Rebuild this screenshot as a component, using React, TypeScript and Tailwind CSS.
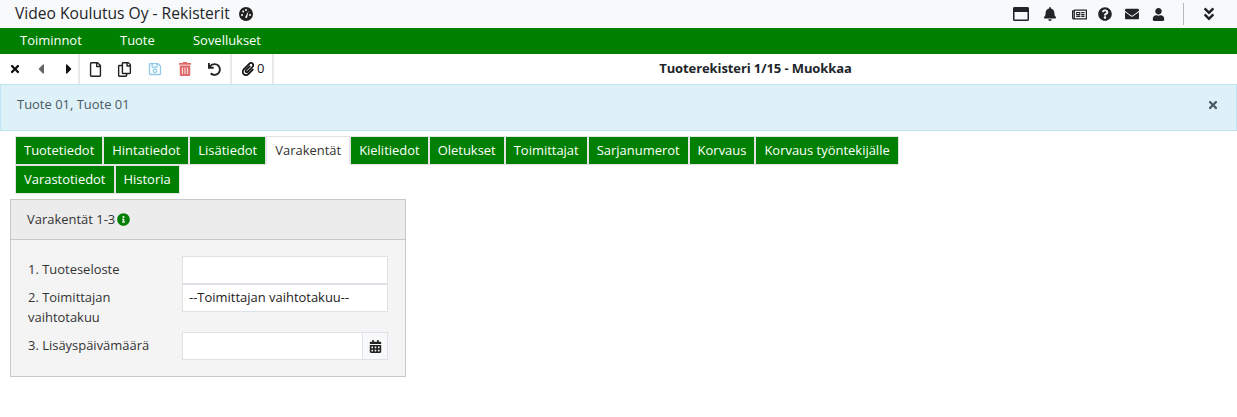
import { ReactNode } from 'react';
import {
  FaTimes, FaCaretLeft, FaCaretRight, FaRegFile, FaRegCopy, FaRegSave, FaTrashAlt, FaUndo, FaPaperclip,
  FaRegWindowMaximize, FaBell, FaRegNewspaper, FaQuestionCircle, FaEnvelope, FaUser, FaAngleDoubleDown,
  FaInfoCircle, FaCalendarAlt,
} from 'react-icons/fa';

const tabsRow1 = ['Tuotetiedot', 'Hintatiedot', 'Lisätiedot', 'Varakentät', 'Kielitiedot', 'Oletukset', 'Toimittajat', 'Sarjanumerot', 'Korvaus', 'Korvaus työntekijälle'];
const tabsRow2 = ['Varastotiedot', 'Historia'];

function Tab({ label }: { label: string }) {
  const active = label === 'Varakentät';
  return (
    <div
      className={`h-[29px] px-[8px] flex items-center border border-[#e4e4e4] text-[12.96px] ${
        active ? 'bg-white text-[#333] border-b-white' : 'bg-[#008000] text-white'
      }`}
    >
      {label}
    </div>
  );
}

function GaugeIcon() {
  return (
    <svg width="14" height="14" viewBox="0 0 14 14" className="ml-[9px]">
      <circle cx="7" cy="7" r="7" fill="#222" />
      <circle cx="3" cy="8" r="1" fill="#fff" />
      <circle cx="4.2" cy="4.4" r="1" fill="#fff" />
      <circle cx="7" cy="3" r="1" fill="#fff" />
      <circle cx="11" cy="8" r="1" fill="#fff" />
      <path d="M6 10.5 L9.6 3.8 L8 11 Z" fill="#fff" />
    </svg>
  );
}

function FieldRow({ label, children, className }: { label: string; children: ReactNode; className?: string }) {
  return (
    <div className={`flex ${className ?? ''}`}>
      <div className="w-[154px] pt-[3px] leading-[20px] pr-[10px]">{label}</div>
      {children}
    </div>
  );
}

export default function App() {
  return (
    <div className="w-[1237px] h-[417px] bg-white overflow-hidden text-[12.96px] text-[#333]" style={{ fontFamily: '"Open Sans", sans-serif' }}>
      {/* Top bar */}
      <div className="h-[28px] bg-[#f8f9fa] flex items-center pl-[15px] pr-[20px] text-[#212529]">
        <span className="text-[15.6px]">Video Koulutus Oy - Rekisterit</span>
        <GaugeIcon />
        <div className="ml-auto flex items-center text-[#212529]">
          <FaRegWindowMaximize className="text-[16px] mr-[14px]" />
          <FaBell className="text-[14px] mr-[15px]" />
          <FaRegNewspaper className="text-[15px] mr-[11px]" />
          <FaQuestionCircle className="text-[14px] mr-[13px]" />
          <FaEnvelope className="text-[14px] mr-[13px]" />
          <FaUser className="text-[13px] mr-[18px]" />
          <div className="w-px h-[22px] bg-[#b8b8b8] mr-[17px]" />
          <FaAngleDoubleDown className="text-[16px]" />
        </div>
      </div>

      {/* Green menu */}
      <div className="h-[26px] bg-[#008000] flex items-center pl-[20px] text-white">
        <span className="w-[100px]">Toiminnot</span>
        <span className="w-[73px]">Tuote</span>
        <span>Sovellukset</span>
      </div>

      {/* Toolbar */}
      <div className="h-[30px] flex">
        <div className="w-[80px] flex items-center border-r-2 border-[#e8e8e8] pl-[9px] text-[#111]">
          <FaTimes className="text-[12px] mr-[12px]" />
          <FaCaretLeft className="text-[16px] text-[#666] mr-[12px]" />
          <FaCaretRight className="text-[16px]" />
        </div>
        <div className="w-[152px] flex items-center border-r-2 border-[#e8e8e8] text-[#222]">
          <FaRegFile className="text-[15px] ml-[8px] mr-[14px]" />
          <FaRegCopy className="text-[15px] mr-[16px]" />
          <FaRegSave className="text-[14px] text-[#8fcbe8] mr-[16px]" />
          <FaTrashAlt className="text-[14px] text-[#e06a6a] mr-[16px]" />
          <FaUndo className="text-[13px]" />
        </div>
        <div className="w-[42px] flex items-center border-r-2 border-[#e8e8e8] pl-[9px] text-[#111]">
          <FaPaperclip className="text-[14px] mr-[2px]" />
          <span>0</span>
        </div>
        <div className="flex-1 flex items-center justify-center font-bold tracking-[-0.1px] text-[13px] text-[#212529]">Tuoterekisteri 1/15 - Muokkaa</div>
      </div>

      {/* Alert */}
      <div className="h-[47px] bg-[#dff1f8] border border-[#bde5f3] flex items-center pl-[16px] pr-[17px] text-[#4a5a63]">
        <span className="-mt-[6px]">Tuote 01, Tuote 01</span>
        <FaTimes className="ml-auto text-[12px] text-[#4a5a63] -mt-[6px]" />
      </div>

      {/* Tabs */}
      <div className="pl-[15px] pt-[5px]">
        <div className="flex">{tabsRow1.map((t) => <Tab key={t} label={t} />)}</div>
        <div className="flex">{tabsRow2.map((t) => <Tab key={t} label={t} />)}</div>
      </div>

      {/* Panel */}
      <div className="ml-[10px] mt-[5px] w-[396px] h-[178px] border border-[#c8c8c8] bg-[#f4f4f4]">
        <div className="h-[40px] bg-[#ececec] border-b border-[#c8c8c8] flex items-center pl-[16px]">
          <span>Varakentät 1-3</span>
          <FaInfoCircle className="ml-[2px] text-[13px] text-[#008000]" />
        </div>
        <div className="pl-[17px] pt-[16px]">
          <FieldRow label="1. Tuoteseloste" className="h-[28px]">
            <div className="w-[206px] h-[28px] bg-white border border-[#dee2e6]" />
          </FieldRow>
          <FieldRow label="2. Toimittajan vaihtotakuu" className="h-[48px]">
            <div className="w-[206px] h-[28px] bg-white border border-[#dee2e6] flex items-center pl-[6px] pb-[1px] text-[#222]">--Toimittajan vaihtotakuu--</div>
          </FieldRow>
          <FieldRow label="3. Lisäyspäivämäärä" className="h-[28px]">
            <div className="w-[206px] h-[28px] bg-white border border-[#dee2e6] flex">
              <div className="flex-1" />
              <div className="w-[25px] bg-[#f8f9fa] border-l border-[#dee2e6] flex items-center justify-center">
                <FaCalendarAlt className="text-[13px] text-[#222]" />
              </div>
            </div>
          </FieldRow>
        </div>
      </div>
    </div>
  );
}
